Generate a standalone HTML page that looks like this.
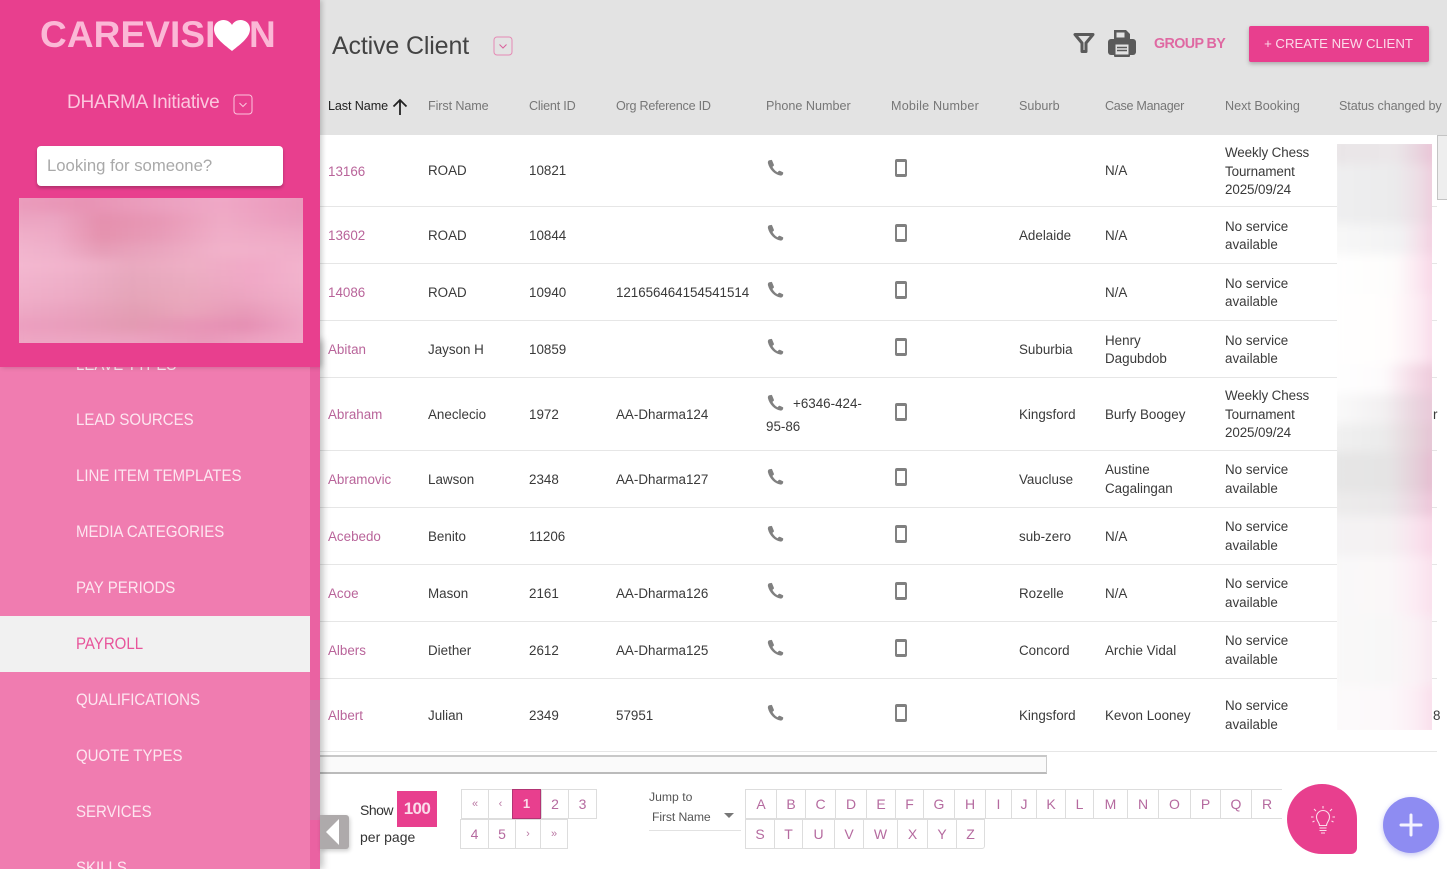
<!DOCTYPE html>
<html><head><meta charset="utf-8"><title>Active Client</title>
<style>
*{box-sizing:border-box}
html,body{margin:0;padding:0}
body{width:1447px;height:869px;position:relative;overflow:hidden;background:#fff;font-family:"Liberation Sans",sans-serif;color:#333}
.a{position:absolute;white-space:nowrap}
.t{position:absolute;white-space:nowrap;font-size:13.4px;line-height:18.5px;color:#3a3a3a;letter-spacing:0;margin-top:1px}
.l{color:#b9649a}
.h{position:absolute;top:97px;font-size:12.6px;line-height:18px;color:#777;white-space:nowrap}
.ln{position:absolute;left:320px;width:1117px;height:1px;background:#e6e6e6}
.n{position:absolute;left:76px;font-size:16.5px;line-height:24px;color:#fde6f0;white-space:nowrap;transform:scaleX(.91);transform-origin:left center}
.c{position:absolute;border:1px solid #ddd;text-align:center;font-size:14px;line-height:28px;color:#b56a9f;background:#fff}
.ph,.mb{position:absolute}
.m{position:absolute;left:0;width:100%}
</style></head><body>

<!-- header -->
<div class="a" style="left:320px;top:0;width:1127px;height:135px;background:#e3e3e3"></div>
<div class="a" style="left:332px;top:30px;font-size:25px;line-height:32px;color:#444;letter-spacing:-.15px">Active Client</div>
<svg class="a" style="left:493px;top:36px" width="20" height="20" viewBox="0 0 20 20"><rect x="1" y="1" width="18" height="18" rx="3" fill="none" stroke="#e58ab4" stroke-width="1"/><path d="M6.500 8.500L10 12l3.500-3.500" fill="none" stroke="#d9619b" stroke-width="1"/></svg>
<svg class="a" style="left:1073px;top:32px" width="22" height="22" viewBox="0 0 22 22"><path d="M2 2.500h18L13 11v8.500H9V11z" fill="none" stroke="#5a5a5a" stroke-width="3" stroke-linejoin="round"/></svg>
<svg class="a" style="left:1108px;top:29px" width="28" height="28" viewBox="0 0 28 28"><path d="M6 1h12l4 4v6H6z" fill="#5a5a5a"/><path d="M8.500 3.500h8v5h-8z" fill="#e3e3e3"/><rect x="0" y="10" width="28" height="16" rx="3" fill="#5a5a5a"/><rect x="6" y="15" width="16" height="13" rx="1" fill="#5a5a5a"/><rect x="7.500" y="15.500" width="13" height="10" fill="#e3e3e3"/><path d="M9 18.500h10M9 21.500h10" stroke="#5a5a5a" stroke-width="1.500"/></svg>
<div class="a" style="left:1154px;top:35px;font-size:14.300px;line-height:18px;font-weight:700;color:#df5c9c;letter-spacing:-.6px;opacity:.9">GROUP BY</div>
<div class="a" style="left:1249px;top:26px;width:180px;height:36px;background:#e83f8e;border-radius:2px;box-shadow:0 2px 4px rgba(0,0,0,.25);color:#fbdcea;font-size:13.200px;line-height:36px;text-align:center;padding-right:1px">+ CREATE NEW CLIENT</div>

<div class="h" style="left:328px;color:#222;letter-spacing:-.1px">Last Name</div>
<svg class="a" style="left:391px;top:98px" width="18" height="18" viewBox="0 0 18 18"><path d="M9 17V2M2.500 8.500L9 2l6.500 6.500" fill="none" stroke="#222" stroke-width="1.800"/></svg>
<div class="h" style="left:428px;letter-spacing:-.1px">First Name</div>
<div class="h" style="left:529px;letter-spacing:-.2px">Client ID</div>
<div class="h" style="left:616px;letter-spacing:-.25px">Org Reference ID</div>
<div class="h" style="left:766px">Phone Number</div>
<div class="h" style="left:891px;letter-spacing:.2px">Mobile Number</div>
<div class="h" style="left:1019px">Suburb</div>
<div class="h" style="left:1105px;letter-spacing:-.3px">Case Manager</div>
<div class="h" style="left:1225px">Next Booking</div>
<div class="h" style="left:1339px;letter-spacing:-.1px">Status changed by</div>

<!-- row lines -->
<div class="ln" style="top:206px"></div><div class="ln" style="top:263px"></div><div class="ln" style="top:320px"></div><div class="ln" style="top:377px"></div><div class="ln" style="top:450px"></div><div class="ln" style="top:507px"></div><div class="ln" style="top:564px"></div><div class="ln" style="top:621px"></div><div class="ln" style="top:678px"></div><div class="ln" style="top:751px"></div>

<!-- rows -->
<div class="t l" style="left:328px;top:162px">13166</div><div class="t" style="left:428px;top:161px">ROAD</div><div class="t" style="left:529px;top:161px">10821</div><div class="t" style="left:1105px;top:161px">N/A</div><div class="t" style="left:1225px;top:143px;letter-spacing:-.1px">Weekly Chess<br>Tournament<br>2025/09/24</div>
<div class="t l" style="left:328px;top:226px">13602</div><div class="t" style="left:428px;top:226px">ROAD</div><div class="t" style="left:529px;top:226px">10844</div><div class="t" style="left:1019px;top:226px">Adelaide</div><div class="t" style="left:1105px;top:226px">N/A</div><div class="t" style="left:1225px;top:217px;line-height:18px">No service<br>available</div>
<div class="t l" style="left:328px;top:283px">14086</div><div class="t" style="left:428px;top:283px">ROAD</div><div class="t" style="left:529px;top:283px">10940</div><div class="t" style="left:616px;top:283px;letter-spacing:-.05px">121656464154541514</div><div class="t" style="left:1105px;top:283px">N/A</div><div class="t" style="left:1225px;top:274px;line-height:18px">No service<br>available</div>
<div class="t l" style="left:328px;top:340px">Abitan</div><div class="t" style="left:428px;top:340px">Jayson H</div><div class="t" style="left:529px;top:340px">10859</div><div class="t" style="left:1019px;top:340px">Suburbia</div><div class="t" style="left:1105px;top:331px;line-height:18px">Henry<br>Dagubdob</div><div class="t" style="left:1225px;top:331px;line-height:18px">No service<br>available</div>
<div class="t l" style="left:328px;top:405px">Abraham</div><div class="t" style="left:428px;top:405px">Aneclecio</div><div class="t" style="left:529px;top:405px">1972</div><div class="t" style="left:616px;top:405px">AA-Dharma124</div><div class="t" style="left:793px;top:394px">+6346-424-</div><div class="t" style="left:766px;top:417px">95-86</div><div class="t" style="left:1019px;top:405px">Kingsford</div><div class="t" style="left:1105px;top:405px">Burfy Boogey</div><div class="t" style="left:1225px;top:386px;letter-spacing:-.1px">Weekly Chess<br>Tournament<br>2025/09/24</div>
<div class="t l" style="left:328px;top:470px">Abramovic</div><div class="t" style="left:428px;top:470px">Lawson</div><div class="t" style="left:529px;top:470px">2348</div><div class="t" style="left:616px;top:470px">AA-Dharma127</div><div class="t" style="left:1019px;top:470px">Vaucluse</div><div class="t" style="left:1105px;top:460px">Austine<br>Cagalingan</div><div class="t" style="left:1225px;top:460px">No service<br>available</div>
<div class="t l" style="left:328px;top:527px">Acebedo</div><div class="t" style="left:428px;top:527px">Benito</div><div class="t" style="left:529px;top:527px">11206</div><div class="t" style="left:1019px;top:527px">sub-zero</div><div class="t" style="left:1105px;top:527px">N/A</div><div class="t" style="left:1225px;top:517px">No service<br>available</div>
<div class="t l" style="left:328px;top:584px">Acoe</div><div class="t" style="left:428px;top:584px">Mason</div><div class="t" style="left:529px;top:584px">2161</div><div class="t" style="left:616px;top:584px">AA-Dharma126</div><div class="t" style="left:1019px;top:584px">Rozelle</div><div class="t" style="left:1105px;top:584px">N/A</div><div class="t" style="left:1225px;top:574px">No service<br>available</div>
<div class="t l" style="left:328px;top:641px">Albers</div><div class="t" style="left:428px;top:641px">Diether</div><div class="t" style="left:529px;top:641px">2612</div><div class="t" style="left:616px;top:641px">AA-Dharma125</div><div class="t" style="left:1019px;top:641px">Concord</div><div class="t" style="left:1105px;top:641px">Archie Vidal</div><div class="t" style="left:1225px;top:631px">No service<br>available</div>
<div class="t l" style="left:328px;top:706px">Albert</div><div class="t" style="left:428px;top:706px">Julian</div><div class="t" style="left:529px;top:706px">2349</div><div class="t" style="left:616px;top:706px">57951</div><div class="t" style="left:1019px;top:706px">Kingsford</div><div class="t" style="left:1105px;top:706px">Kevon Looney</div><div class="t" style="left:1225px;top:696px">No service<br>available</div>

<!-- phone / mobile icon symbols -->
<svg width="0" height="0" style="position:absolute"><defs>
<symbol id="p" viewBox="0 0 18 18"><path d="M2 1.500c-.8.500-1.300 1.500-1 3 .8 3.300 2.500 6.300 5 8.700 2.400 2.300 5.200 3.800 8 4.300 1.300.2 2.300-.3 2.800-1.200l.4-1.300c.1-.5-.1-.9-.6-1.100l-3.100-1.400c-.4-.2-.8-.1-1.100.2l-1.200 1.300c-2.200-1-4.500-3.500-5.400-5.600l1.300-1.200c.3-.3.400-.7.200-1.100L5.400 1.500C5.200 1 4.700.8 4.200 1z" fill="#808080"/></symbol>
<symbol id="m" viewBox="0 0 12 18"><path fill-rule="evenodd" d="M2 0h8a2 2 0 0 1 2 2v14a2 2 0 0 1-2 2H2a2 2 0 0 1-2-2V2a2 2 0 0 1 2-2zm0 3v12h8V3z" fill="#808080"/></symbol>
</defs></svg>
<svg class="ph" style="left:767px;top:159px" width="17" height="17"><use href="#p"/></svg><svg class="mb" style="left:895px;top:159px" width="12" height="18"><use href="#m"/></svg>
<svg class="ph" style="left:767px;top:224px" width="17" height="17"><use href="#p"/></svg><svg class="mb" style="left:895px;top:224px" width="12" height="18"><use href="#m"/></svg>
<svg class="ph" style="left:767px;top:281px" width="17" height="17"><use href="#p"/></svg><svg class="mb" style="left:895px;top:281px" width="12" height="18"><use href="#m"/></svg>
<svg class="ph" style="left:767px;top:338px" width="17" height="17"><use href="#p"/></svg><svg class="mb" style="left:895px;top:338px" width="12" height="18"><use href="#m"/></svg>
<svg class="ph" style="left:767px;top:394px" width="17" height="17"><use href="#p"/></svg><svg class="mb" style="left:895px;top:403px" width="12" height="18"><use href="#m"/></svg>
<svg class="ph" style="left:767px;top:468px" width="17" height="17"><use href="#p"/></svg><svg class="mb" style="left:895px;top:468px" width="12" height="18"><use href="#m"/></svg>
<svg class="ph" style="left:767px;top:525px" width="17" height="17"><use href="#p"/></svg><svg class="mb" style="left:895px;top:525px" width="12" height="18"><use href="#m"/></svg>
<svg class="ph" style="left:767px;top:582px" width="17" height="17"><use href="#p"/></svg><svg class="mb" style="left:895px;top:582px" width="12" height="18"><use href="#m"/></svg>
<svg class="ph" style="left:767px;top:639px" width="17" height="17"><use href="#p"/></svg><svg class="mb" style="left:895px;top:639px" width="12" height="18"><use href="#m"/></svg>
<svg class="ph" style="left:767px;top:704px" width="17" height="17"><use href="#p"/></svg><svg class="mb" style="left:895px;top:704px" width="12" height="18"><use href="#m"/></svg>

<!-- clipped status text -->
<div class="t" style="left:1433px;top:405px">r</div>
<div class="t" style="left:1433px;top:706px">8</div>

<!-- blurred right column -->
<div class="a" style="left:1337px;top:144px;width:95px;height:586px;overflow:hidden;background:#fff">
<div style="position:absolute;left:-8px;top:-8px;width:111px;height:602px;filter:blur(5px)">
<div class="m" style="top:0;height:28px;background:linear-gradient(90deg,#e9e5e7 0,#ebe7e9 60%,#e8d4de 80%,#ebbdd3 100%)"></div>
<div class="m" style="top:28px;height:60px;background:linear-gradient(90deg,#efeff0 0,#ebebec 60%,#eddde5 82%,#eec4d8 100%)"></div>
<div class="m" style="top:88px;height:30px;background:linear-gradient(90deg,#f8f8f8 0,#f2f2f3 65%,#f4e0ea 82%,#f2c8dc 100%)"></div>
<div class="m" style="top:118px;height:40px;background:linear-gradient(90deg,#fff 0,#fdfcfb 60%,#fbe6f0 82%,#f7cfe2 100%)"></div>
<div class="m" style="top:158px;height:70px;background:linear-gradient(90deg,#fff 0,#fffdfc 55%,#fcebf3 82%,#f8d3e5 100%)"></div>
<div class="m" style="top:228px;height:30px;background:linear-gradient(90deg,#fff 0,#fdfbfc 50%,#f5dde8 75%,#ecc5d8 100%)"></div>
<div class="m" style="top:258px;height:30px;background:linear-gradient(90deg,#fbfbfb 0,#f2f0f1 50%,#ead7e0 75%,#e8c3d6 100%)"></div>
<div class="m" style="top:288px;height:28px;background:linear-gradient(90deg,#f1f1f1 0,#ebebeb 50%,#e6d6dc 75%,#e5bed1 100%)"></div>
<div class="m" style="top:316px;height:40px;background:linear-gradient(90deg,#e6e6e6 0,#e5e4e4 55%,#e5cfd9 78%,#e6b6cd 100%)"></div>
<div class="m" style="top:356px;height:24px;background:linear-gradient(90deg,#edecec 0,#eae8e9 55%,#ecd6e1 78%,#efbfd6 100%)"></div>
<div class="m" style="top:380px;height:40px;background:linear-gradient(90deg,#f4f3f4 0,#f4f1f2 55%,#f9e3ee 78%,#f7d0e3 100%)"></div>
<div class="m" style="top:420px;height:60px;background:linear-gradient(90deg,#f9f9f9 0,#faf7f8 55%,#fcecf4 78%,#f9dbe9 100%)"></div>
<div class="m" style="top:480px;height:70px;background:linear-gradient(90deg,#f9f9f9 0,#f8f7f7 55%,#fbf2f6 78%,#f7e3ed 100%)"></div>
<div class="m" style="top:550px;height:52px;background:linear-gradient(90deg,#fcfbfb 0,#fcf8fa 55%,#fceef5 78%,#f9d9e8 100%)"></div>
</div>
</div>

<!-- vertical scrollbar thumb -->
<div class="a" style="left:1437px;top:135px;width:10px;height:65px;background:#eee;border:1px solid #c4c4c4;border-right:none"></div>

<!-- bottom -->
<div class="a" style="left:320px;top:755px;width:727px;height:19px;background:#fafafa;border:1px solid #ccc;border-top:2px solid #c8c8c8;border-bottom:2px solid #bbb;border-left:none"></div>
<div class="a" style="left:360px;top:801px;font-size:14px;line-height:18px;color:#333;letter-spacing:-.5px">Show</div>
<div class="a" style="left:397px;top:791px;width:40px;height:36px;background:#e83f8e;color:#fbdcea;font-size:17px;font-weight:700;letter-spacing:-.6px;line-height:36px;text-align:center">100</div>
<div class="a" style="left:360px;top:828px;font-size:14px;line-height:18px;color:#333">per page</div>

<div class="c" style="left:461px;top:789px;width:28px;height:30px;font-size:11px;color:#bb7aa5">«</div>
<div class="c" style="left:488px;top:789px;width:25px;height:30px;font-size:11px;color:#bb7aa5">‹</div>
<div class="c" style="left:512px;top:789px;width:29px;height:30px;background:#e83f8e;border-color:#b23574;color:#fbdcea;font-weight:700;font-size:13px">1</div>
<div class="c" style="left:541px;top:789px;width:28px;height:30px">2</div>
<div class="c" style="left:568px;top:789px;width:29px;height:30px">3</div>
<div class="c" style="left:460px;top:819px;width:29px;height:30px">4</div>
<div class="c" style="left:488px;top:819px;width:28px;height:30px">5</div>
<div class="c" style="left:515px;top:819px;width:26px;height:30px;font-size:11px;color:#bb7aa5">›</div>
<div class="c" style="left:540px;top:819px;width:28px;height:30px;font-size:11px;color:#bb7aa5">»</div>

<div class="a" style="left:649px;top:789px;font-size:12.200px;line-height:16px;color:#555">Jump to</div>
<div class="a" style="left:652px;top:809px;font-size:12.200px;line-height:16px;color:#555;letter-spacing:-.1px">First Name</div>
<div class="a" style="left:724px;top:813px;width:0;height:0;border-left:5px solid transparent;border-right:5px solid transparent;border-top:5px solid #777"></div>
<div class="a" style="left:649px;top:830px;width:92px;height:1px;background:#e2e2e2"></div>

<div class="c" style="left:745px;top:789px;width:32px;height:30px">A</div>
<div class="c" style="left:776px;top:789px;width:30px;height:30px">B</div>
<div class="c" style="left:805px;top:789px;width:31px;height:30px">C</div>
<div class="c" style="left:835px;top:789px;width:32px;height:30px">D</div>
<div class="c" style="left:866px;top:789px;width:30px;height:30px">E</div>
<div class="c" style="left:895px;top:789px;width:29px;height:30px">F</div>
<div class="c" style="left:923px;top:789px;width:32px;height:30px">G</div>
<div class="c" style="left:954px;top:789px;width:32px;height:30px">H</div>
<div class="c" style="left:985px;top:789px;width:27px;height:30px">I</div>
<div class="c" style="left:1011px;top:789px;width:26px;height:30px">J</div>
<div class="c" style="left:1036px;top:789px;width:30px;height:30px">K</div>
<div class="c" style="left:1065px;top:789px;width:29px;height:30px">L</div>
<div class="c" style="left:1093px;top:789px;width:35px;height:30px">M</div>
<div class="c" style="left:1127px;top:789px;width:32px;height:30px">N</div>
<div class="c" style="left:1158px;top:789px;width:33px;height:30px">O</div>
<div class="c" style="left:1190px;top:789px;width:31px;height:30px">P</div>
<div class="c" style="left:1220px;top:789px;width:32px;height:30px">Q</div>
<div class="c" style="left:1251px;top:789px;width:31px;height:30px;border-right:none">R</div>
<div class="c" style="left:745px;top:819px;width:30px;height:30px">S</div>
<div class="c" style="left:774px;top:819px;width:29px;height:30px">T</div>
<div class="c" style="left:802px;top:819px;width:33px;height:30px">U</div>
<div class="c" style="left:834px;top:819px;width:30px;height:30px">V</div>
<div class="c" style="left:863px;top:819px;width:35px;height:30px">W</div>
<div class="c" style="left:897px;top:819px;width:31px;height:30px">X</div>
<div class="c" style="left:927px;top:819px;width:30px;height:30px">Y</div>
<div class="c" style="left:956px;top:819px;width:29px;height:30px;border-radius:0 0 3px 0">Z</div>

<!-- floating -->
<div class="a" style="left:1287px;top:784px;width:70px;height:70px;background:#e83f8e;border-radius:35px 35px 6px 35px"></div>
<svg class="a" style="left:1309px;top:805px" width="28" height="30" viewBox="0 0 28 30" fill="none" stroke="#fbdcea" stroke-width="1.100"><path d="M10.500 20.500c0-3-3-4.500-3-8.500a6.500 6.500 0 0 1 13 0c0 4-3 5.500-3 8.500z"/><path d="M10.500 23h7M10.500 25.500h7M12 28h4"/><path d="M14 1v2.500M5 4l2 2M23 4l-2 2M2 12h2.500M23.500 12H26M3.500 17l2-1M24.500 17l-2-1"/></svg>
<div class="a" style="left:1383px;top:797px;width:56px;height:56px;border-radius:50%;background:#8e8cf2;box-shadow:0 2px 6px rgba(110,110,220,.4)"></div>
<svg class="a" style="left:1399px;top:813px" width="24" height="24" viewBox="0 0 24 24"><path d="M12 2v20M2 12h20" stroke="#f4f3ff" stroke-width="3" stroke-linecap="round"/></svg>

<!-- sidebar lower -->
<div class="a" style="left:0;top:340px;width:320px;height:529px;background:#f07cb0;box-shadow:3px 0 7px rgba(0,0,0,.25);overflow:hidden">
<div class="n" style="top:13px">LEAVE TYPES</div>
<div class="n" style="top:68px">LEAD SOURCES</div>
<div class="n" style="top:124px">LINE ITEM TEMPLATES</div>
<div class="n" style="top:180px">MEDIA CATEGORIES</div>
<div class="n" style="top:236px">PAY PERIODS</div>
<div class="a" style="left:0;top:276px;width:310px;height:56px;background:#f1f1f1"></div>
<div class="n" style="top:292px;color:#e8559b">PAYROLL</div>
<div class="n" style="top:348px">QUALIFICATIONS</div>
<div class="n" style="top:404px">QUOTE TYPES</div>
<div class="n" style="top:460px">SERVICES</div>
<div class="n" style="top:516px">SKILLS</div>
<div class="a" style="left:310px;top:27px;width:10px;height:502px;background:#ea62a2"></div>
<div class="a" style="left:310px;top:360px;width:10px;height:120px;background:#d478a8"></div>
</div>

<!-- collapse -->
<div class="a" style="left:320px;top:815px;width:29px;height:34px;background:#aeaaab;border-radius:0 3px 3px 0;box-shadow:1px 2px 4px rgba(0,0,0,.2)"></div>
<div class="a" style="left:326px;top:819px;width:0;height:0;border-top:13px solid transparent;border-bottom:13px solid transparent;border-right:13px solid #fff"></div>

<!-- sidebar top -->
<div class="a" style="left:0;top:0;width:320px;height:367px;background:#e83f8e;box-shadow:2px 0 5px rgba(0,0,0,.2)">
<div class="a" style="left:40px;top:13px;font-size:37px;line-height:44px;font-weight:700;color:#fbb8d6;letter-spacing:.1px">CAREVISI</div>
<svg class="a" style="left:214px;top:20px" width="36" height="31" viewBox="0 0 36 31"><path d="M18 31C8 23 0 17 0 9 0 3 5 0 9.500 0 13 0 16.500 2 18 5 19.500 2 23 0 26.500 0 31 0 36 3 36 9c0 8-8 14-18 22z" fill="#fff"/></svg>
<div class="a" style="left:249px;top:13px;font-size:37px;line-height:44px;font-weight:700;color:#fbb8d6">N</div>
<div class="a" style="left:67px;top:90px;font-size:19px;line-height:26px;color:#fcc6de;letter-spacing:-.22px">DHARMA Initiative</div>
<svg class="a" style="left:233px;top:94px" width="20" height="21" viewBox="0 0 20 21"><rect x="1" y="1" width="18" height="19" rx="3" fill="none" stroke="#fbc5dd" stroke-width="1"/><path d="M6.500 9L10 12.500 13.500 9" fill="none" stroke="#fbc5dd" stroke-width="1"/></svg>
<div class="a" style="left:37px;top:146px;width:246px;height:40px;background:#fff;border-radius:4px;box-shadow:0 2px 3px rgba(0,0,0,.25);padding-left:10px;font-size:16.700px;line-height:40px;color:#a9a9a9">Looking for someone?</div>
<div class="a" style="left:19px;top:198px;width:284px;height:145px;overflow:hidden;background:#f0b0c8">
<div style="position:absolute;left:-8px;top:-8px;width:300px;height:161px;filter:blur(5px)">
<div class="m" style="top:0;height:23px;background:linear-gradient(90deg,#eb9dbd 0,#e893b4 25%,#eba0bf 50%,#efa8c6 70%,#ec9cbe 90%,#e997ba 100%)"></div>
<div class="m" style="top:23px;height:15px;background:linear-gradient(90deg,#eda5c2 0,#eba5c2 15%,#e590ae 30%,#e898b6 50%,#efabc6 70%,#ec9fc0 90%,#e99dbe 100%)"></div>
<div class="m" style="top:38px;height:15px;background:linear-gradient(90deg,#f0b0c9 0,#eeaac6 15%,#e592ae 30%,#e89cb8 50%,#f0aec8 70%,#eea6c4 100%)"></div>
<div class="m" style="top:53px;height:15px;background:linear-gradient(90deg,#f2b5ce 0,#efb0ca 15%,#e69db7 30%,#eaa6bf 50%,#f1b2ca 70%,#f0adc9 100%)"></div>
<div class="m" style="top:68px;height:15px;background:linear-gradient(90deg,#f4b8d0 0,#f1b3cc 20%,#e9a9bf 40%,#eeafc5 60%,#f1a9c7 80%,#f2b4cd 100%)"></div>
<div class="m" style="top:83px;height:15px;background:linear-gradient(90deg,#f2b4ce 0,#eeafc8 20%,#e6a7bc 40%,#ebacc1 60%,#f0a8c6 80%,#f2b4cd 100%)"></div>
<div class="m" style="top:98px;height:15px;background:linear-gradient(90deg,#f1b0ca 0,#edabc5 20%,#e5a5b9 40%,#eaa9bd 58%,#eca4c0 75%,#f1b0cb 100%)"></div>
<div class="m" style="top:113px;height:15px;background:linear-gradient(90deg,#eeaac6 0,#eaa3bf 20%,#e39fb4 42%,#e9a5bb 58%,#e89bb9 78%,#f0acc9 100%)"></div>
<div class="m" style="top:128px;height:15px;background:linear-gradient(90deg,#ed9fc0 0,#e99dbb 20%,#e39ab2 40%,#e895b6 60%,#e58fb3 78%,#f0a9c8 100%)"></div>
<div class="m" style="top:143px;height:18px;background:linear-gradient(90deg,#eea6c4 0,#eba3c0 40%,#e999ba 65%,#f0aac8 100%)"></div>
</div>
</div>
</div>
</body></html>
